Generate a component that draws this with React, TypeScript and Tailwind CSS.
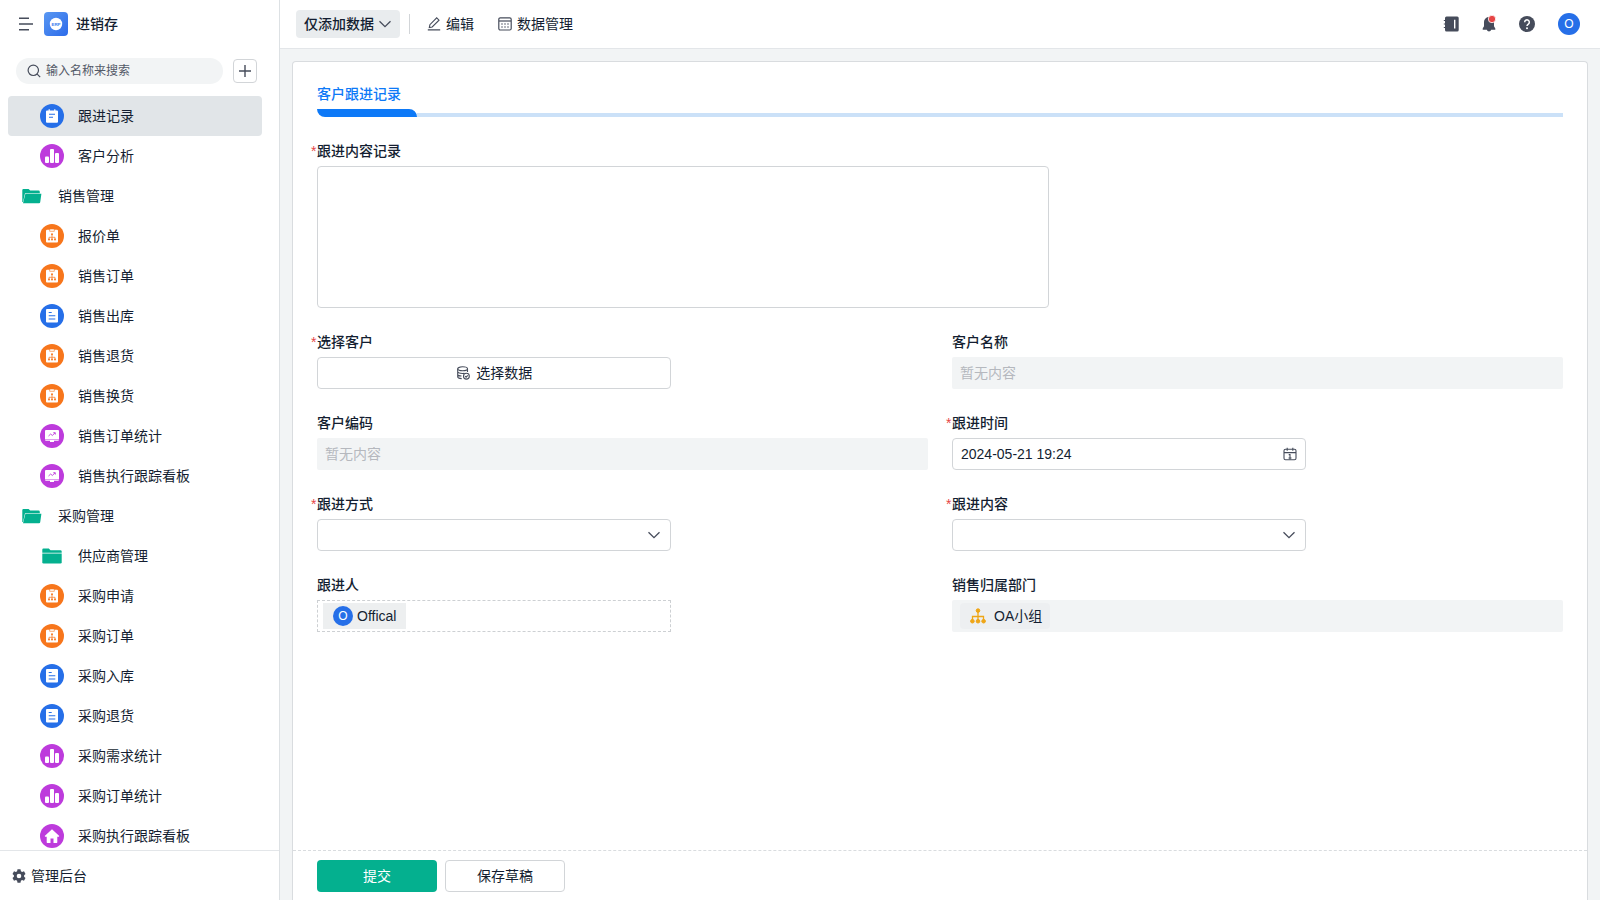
import { ReactNode, useState } from 'react';
import clsx from 'clsx';

type IconKind = 'note' | 'chart' | 'flow' | 'doc' | 'board' | 'home' | 'folder' | 'folderOpen';

interface NavItem {
    label: string;
    icon: IconKind;
    level: 0 | 1;
}

const navItems: NavItem[] = [
    { label: '跟进记录', icon: 'note', level: 1 },
    { label: '客户分析', icon: 'chart', level: 1 },
    { label: '销售管理', icon: 'folderOpen', level: 0 },
    { label: '报价单', icon: 'flow', level: 1 },
    { label: '销售订单', icon: 'flow', level: 1 },
    { label: '销售出库', icon: 'doc', level: 1 },
    { label: '销售退货', icon: 'flow', level: 1 },
    { label: '销售换货', icon: 'flow', level: 1 },
    { label: '销售订单统计', icon: 'board', level: 1 },
    { label: '销售执行跟踪看板', icon: 'board', level: 1 },
    { label: '采购管理', icon: 'folderOpen', level: 0 },
    { label: '供应商管理', icon: 'folder', level: 1 },
    { label: '采购申请', icon: 'flow', level: 1 },
    { label: '采购订单', icon: 'flow', level: 1 },
    { label: '采购入库', icon: 'doc', level: 1 },
    { label: '采购退货', icon: 'doc', level: 1 },
    { label: '采购需求统计', icon: 'chart', level: 1 },
    { label: '采购订单统计', icon: 'chart', level: 1 },
    { label: '采购执行跟踪看板', icon: 'home', level: 1 },
];

const BLUE = '#266FE8';
const PURPLE = '#BD3BDC';
const ORANGE = '#F7761C';
const GREEN = '#04B08F';

function NavIcon({ kind }: { kind: IconKind }) {
    return (
        <svg viewBox="0 0 24 24" className="size-6 shrink-0" fill="none" aria-hidden="true">
            {kind === 'note' && (
                <>
                    <circle cx="12" cy="12" r="12" fill={BLUE} />
                    <path d="M7 6.5h1.6V5.2h1.2v1.3h4.4V5.2h1.2v1.3H17a1 1 0 0 1 1 1v10.3a1 1 0 0 1-1 1H7a1 1 0 0 1-1-1V7.5a1 1 0 0 1 1-1z" fill="#fff" />
                    <path d="M9 10.2h6M9 13.2h4" stroke={BLUE} strokeWidth="1.1" />
                </>
            )}
            {kind === 'chart' && (
                <>
                    <circle cx="12" cy="12" r="12" fill={PURPLE} />
                    <rect x="5" y="12.5" width="4" height="6.5" rx="1" fill="#fff" />
                    <rect x="10" y="5" width="4" height="14" rx="1" fill="#fff" />
                    <rect x="15" y="9" width="4" height="10" rx="1" fill="#fff" />
                </>
            )}
            {kind === 'flow' && (
                <>
                    <circle cx="12" cy="12" r="12" fill={ORANGE} />
                    <path d="M7 5.8h10a1 1 0 0 1 1 1v10.8a1 1 0 0 1-1 1H7a1 1 0 0 1-1-1V6.8a1 1 0 0 1 1-1z" fill="#fff" />
                    <path d="M9.7 5v2.3h4.6V5z" fill="#fff" stroke={ORANGE} strokeWidth=".6" />
                    <path d="M12 10.5V15M9 15v-1.7h6V15" stroke={ORANGE} strokeWidth=".7" />
                    <circle cx="12" cy="10.3" r="1" fill={ORANGE} />
                    <circle cx="9" cy="15.5" r="1" fill={ORANGE} />
                    <circle cx="12" cy="15.5" r="1" fill={ORANGE} />
                    <circle cx="15" cy="15.5" r="1" fill={ORANGE} />
                </>
            )}
            {kind === 'doc' && (
                <>
                    <circle cx="12" cy="12" r="12" fill={BLUE} />
                    <rect x="6" y="5" width="12" height="13.5" rx="1" fill="#fff" />
                    <path d="M8.7 8.5h3M8.7 11.8h6.6M8.7 15h6.6" stroke={BLUE} strokeWidth="1.1" />
                </>
            )}
            {kind === 'board' && (
                <>
                    <circle cx="12" cy="12" r="12" fill={PURPLE} />
                    <path d="M6 6h12a1 1 0 0 1 1 1v7.9H5V7a1 1 0 0 1 1-1z" fill="#fff" />
                    <path d="M5 15.4h14v.4a1 1 0 0 1-1 1h-4V18h-4v-1.2H6a1 1 0 0 1-1-1z" fill="#fff" />
                    <path d="M8.5 12l2.2-2 1.6 1.5L15 8.9M13.3 8.7h2v1.9" stroke={PURPLE} strokeWidth=".9" />
                </>
            )}
            {kind === 'home' && (
                <>
                    <circle cx="12" cy="12" r="12" fill={PURPLE} />
                    <path d="M12 5.2l7.3 6.8-.5.8h-1.5v5.5a.6.6 0 0 1-.6.6h-3.2v-4.4h-3v4.4H7.3a.6.6 0 0 1-.6-.6v-5.5H5.2l-.5-.8z" fill="#fff" />
                </>
            )}
            {kind === 'folder' && (
                <>
                    <path d="M2.3 8.8V5.7a1.1 1.1 0 0 1 1.1-1.1h5.4l1.7 1.6h9.9a1.3 1.3 0 0 1 1.3 1.3v1.3z" fill={GREEN} />
                    <path d="M2.3 9.6h19.4v8.7a1.3 1.3 0 0 1-1.3 1.3H3.6a1.3 1.3 0 0 1-1.3-1.3z" fill={GREEN} />
                </>
            )}
            {kind === 'folderOpen' && (
                <>
                    <path d="M2.3 18V6.2a1.1 1.1 0 0 1 1.1-1.1h5.2l1.6 1.5h8.3a1.3 1.3 0 0 1 1.3 1.3v1.3H5L3 18z" fill={GREEN} />
                    <path d="M5.4 9.8h16l-1.2 8.5a1.2 1.2 0 0 1-1.2 1H3z" fill={GREEN} />
                </>
            )}
        </svg>
    );
}

function Chevron() {
    return (
        <svg viewBox="0 0 14 14" className="size-3.5 shrink-0" fill="none" stroke="#464C5B" strokeWidth="1.3" aria-hidden="true">
            <path d="M1.5 4.2L7 9.7l5.5-5.5" />
        </svg>
    );
}

function Field({ label, id, required, children }: { label: string; id: string; required?: boolean; children: ReactNode }) {
    return (
        <div className="flex min-w-0 flex-col">
            <label htmlFor={id} className="mb-1.5 flex h-[19px] items-center font-medium">
                {required && <span className="-ml-1.5 w-1.5 text-sm font-normal text-[#E64545]">*</span>}
                {label}
            </label>
            {children}
        </div>
    );
}

function EmptySelect({ id }: { id: string }) {
    return (
        <div className="relative w-[58%]">
            <select id={id} className="block h-8 w-full appearance-none rounded border border-[#D2D5D8] bg-white px-2">
                <option value=""></option>
            </select>
            <span className="pointer-events-none absolute inset-y-0 right-2.5 flex items-center">
                <Chevron />
            </span>
        </div>
    );
}

function Sidebar() {
    const [active, setActive] = useState('跟进记录');

    return (
        <aside className="flex w-70 shrink-0 flex-col border-r border-[#DDE1E4] bg-white">
            <div className="flex h-12 shrink-0 items-center pl-[19px]">
                <button type="button" aria-label="收起菜单">
                    <svg viewBox="0 0 14 14" className="size-3.5" stroke="#464C5B" strokeWidth="1.5" aria-hidden="true">
                        <path d="M0 1.3h10M0 7h14M0 12.7h10" />
                    </svg>
                </button>
                <svg viewBox="0 0 24 24" className="ml-[11px] size-6" aria-hidden="true">
                    <defs>
                        <linearGradient id="logo" x1="0" y1="0" x2="1" y2="1">
                            <stop offset="0" stopColor="#5A98F2" />
                            <stop offset="1" stopColor="#2C6BEA" />
                        </linearGradient>
                    </defs>
                    <rect width="24" height="24" rx="4" fill="url(#logo)" />
                    <circle cx="12" cy="12" r="6.2" fill="#fff" />
                    <text x="12" y="13.6" textAnchor="middle" fontSize="4.4" fontWeight="700" fill="#3B7BEE">ERP</text>
                </svg>
                <h1 className="ml-2 font-medium">进销存</h1>
            </div>

            <div className="flex h-12 shrink-0 items-center gap-2.5 pr-[22px] pb-0.5 pl-4">
                <label className="flex h-[26px] min-w-0 flex-1 items-center gap-[5px] rounded-full bg-[#F2F4F5] pl-[11px]">
                    <svg viewBox="0 0 14 14" className="size-3.5 shrink-0" fill="none" stroke="#464C5B" strokeWidth="1.2" aria-hidden="true">
                        <circle cx="6.3" cy="6.3" r="5.2" />
                        <path d="M10.2 10.2l3 3" />
                    </svg>
                    <input
                        type="text"
                        aria-label="搜索"
                        placeholder="输入名称来搜索"
                        className="w-full min-w-0 bg-transparent text-xs outline-none placeholder:text-[#525967]"
                    />
                </label>
                <button type="button" aria-label="新建" className="flex size-6 items-center justify-center rounded border border-[#D2D5D8]">
                    <svg viewBox="0 0 12 12" className="size-3" stroke="#464C5B" strokeWidth="1.4" aria-hidden="true">
                        <path d="M0 6h12M6 0v12" />
                    </svg>
                </button>
            </div>

            <nav className="min-h-0 flex-1 overflow-hidden pr-[17px] pl-2">
                {navItems.map((item) => (
                    <button
                        key={item.label}
                        type="button"
                        onClick={() => setActive(item.label)}
                        className={clsx(
                            'flex h-10 w-full items-center gap-3.5 rounded text-left',
                            item.level === 0 ? 'pl-3' : 'pl-8',
                            active === item.label && 'bg-[#E1E5E8]'
                        )}
                    >
                        <NavIcon kind={item.icon} />
                        {item.label}
                    </button>
                ))}
            </nav>

            <button type="button" className="flex h-[50px] shrink-0 items-center gap-[5px] border-t border-[#E3E6E9] pl-3 text-left">
                <svg viewBox="0 0 14 14" className="size-3.5" fill="#464C5B" aria-hidden="true">
                    <path
                        fillRule="evenodd"
                        d="M5.5.3h3l.4 1.9 1.2.7 1.9-.6 1.5 2.6-1.4 1.3v1.6l1.4 1.3-1.5 2.6-1.9-.6-1.2.7-.4 1.9h-3l-.4-1.9-1.2-.7-1.9.6L.5 9.1l1.4-1.3V6.2L.5 4.9 2 2.3l1.9.6 1.2-.7zM7 4.7a2.3 2.3 0 1 0 0 4.6 2.3 2.3 0 0 0 0-4.6z"
                    />
                </svg>
                管理后台
            </button>
        </aside>
    );
}

function TopBar() {
    return (
        <header className="flex h-[49px] shrink-0 items-center border-b border-[#E3E6E9] bg-white pr-5 pl-4">
            <button type="button" className="flex h-7 items-center gap-1 rounded bg-[#E9ECEE] px-2 font-medium">
                仅添加数据
                <Chevron />
            </button>
            <span className="mx-[9px] h-5 w-px bg-[#D2D5D8]" />
            <button type="button" className="ml-2 flex items-center gap-[5px]">
                <svg viewBox="0 0 14 14" className="size-3.5" fill="none" stroke="#464C5B" strokeWidth="1.1" aria-hidden="true">
                    <path d="M.8 12.9h12.4M2.3 10.6l.6-2.9L9.7.9 12 3.2 5.200 10z" />
                </svg>
                编辑
            </button>
            <button type="button" className="ml-6 flex items-center gap-[5px]">
                <svg viewBox="0 0 14 14" className="size-3.5" fill="none" stroke="#464C5B" strokeWidth="1.2" aria-hidden="true">
                    <rect x=".8" y=".8" width="12.4" height="12.2" rx="1.5" />
                    <path d="M1 4h12" />
                    <path d="M3.2 7h1.6M6.2 7h1.6M9.2 7h1.6M3.2 10h1.6M6.2 10h1.6M9.2 10h1.6" />
                </svg>
                数据管理
            </button>

            <div className="ml-auto flex items-center gap-[22px]">
                <button type="button" aria-label="通讯录">
                    <svg viewBox="0 0 16 16" className="size-4" aria-hidden="true">
                        <path d="M3.5.5h10.700a1.5 1.5 0 0 1 1.500 1.500v12a1.5 1.5 0 0 1-1.500 1.500H3.500A1.500 1.500 0 0 1 2 14V2A1.500 1.500 0 0 1 3.500.5z" fill="#464C5B" />
                        <path d="M.8 4.500h2M.8 8h2M.8 11.500h2" stroke="#464C5B" strokeWidth="1.1" />
                        <path d="M11.700 3.700v8.800" stroke="#fff" strokeWidth="1.4" />
                    </svg>
                </button>
                <button type="button" aria-label="消息">
                    <svg viewBox="0 0 16 18" className="h-[18px] w-4" aria-hidden="true">
                        <path d="M8 2a5 5 0 0 1 5 5v4.2l1.3 2.3v1.3h-4.1a2.3 2.3 0 0 1-4.4 0H1.700v-1.300L3 11.2V7a5 5 0 0 1 5-5z" fill="#464C5B" />
                        <circle cx="11" cy="4" r="3.7" fill="#E64545" stroke="#fff" strokeWidth=".8" />
                    </svg>
                </button>
                <button type="button" aria-label="帮助" className="mr-px">
                    <svg viewBox="0 0 16 16" className="size-4" fill="none" aria-hidden="true">
                        <circle cx="8" cy="8" r="8" fill="#464C5B" />
                        <path d="M5.7 6.2a2.3 2.3 0 1 1 3.6 1.9C8.4 8.7 8 9.1 8 10" stroke="#fff" strokeWidth="1.5" />
                        <circle cx="8" cy="12.2" r="1" fill="#fff" />
                    </svg>
                </button>
                <button type="button" aria-label="账号" className="flex size-[22px] items-center justify-center rounded-full bg-[#266FE8] text-xs text-white">
                    O
                </button>
            </div>
        </header>
    );
}

export default function App() {
    return (
        <div className="flex h-screen bg-[#F2F4F5] font-['Liberation_Sans','Noto_Sans_CJK_SC',sans-serif] text-sm text-[#141E31]">
            <Sidebar />

            <div className="flex min-w-0 flex-1 flex-col">
                <TopBar />

                <main className="flex min-h-0 flex-1 px-3 pt-3">
                    <form className="flex min-w-0 flex-1 flex-col rounded-t border border-b-0 border-[#D9DCDF] bg-white" onSubmit={(e) => e.preventDefault()}>
                        <div className="min-h-0 flex-1 overflow-hidden px-6 pt-5">
                            <h2 className="flex h-6 items-center font-medium text-[#0D79F7]">客户跟进记录</h2>
                            <div className="mt-[3px] flex items-end">
                                <div className="h-2 w-25 rounded-tr-lg rounded-bl-lg bg-[#0D79F7]" />
                                <div className="h-1 flex-1 bg-[#CBE1F8]" />
                            </div>

                            <div className="mt-6 grid grid-cols-2 gap-6">
                                <div className="col-span-2">
                                    <Field label="跟进内容记录" id="content" required>
                                        <textarea id="content" className="block h-[142px] w-[732px] max-w-full resize-none rounded border border-[#D2D5D8] p-2" />
                                    </Field>
                                </div>

                                <Field label="选择客户" id="customer" required>
                                    <button id="customer" type="button" className="flex h-8 w-[58%] items-center justify-center gap-1.5 rounded border border-[#D2D5D8]">
                                        <svg viewBox="0 0 14 14" className="size-3.5" fill="none" stroke="#464C5B" strokeWidth="1.1" aria-hidden="true">
                                            <ellipse cx="6.6" cy="2.8" rx="4.9" ry="2" />
                                            <path d="M1.7 2.8v8c0 .9 1.6 1.7 4 1.8M11.5 2.8v3.3M1.7 5.6c0 1 2 1.9 4.9 1.9.7 0 1.3 0 1.8-.1M1.7 8.2c0 1 1.5 1.7 3.8 1.8" />
                                            <circle cx="10.4" cy="10.2" r="2.9" />
                                            <path d="M9.1 10.2l1 1 1.7-1.8" />
                                        </svg>
                                        选择数据
                                    </button>
                                </Field>

                                <Field label="客户名称" id="name">
                                    <input id="name" readOnly placeholder="暂无内容" className="h-8 w-full rounded-xs bg-[#F2F4F5] px-2 outline-none placeholder:text-[#B5B8BE]" />
                                </Field>

                                <Field label="客户编码" id="code">
                                    <input id="code" readOnly placeholder="暂无内容" className="h-8 w-full rounded-xs bg-[#F2F4F5] px-2 outline-none placeholder:text-[#B5B8BE]" />
                                </Field>

                                <Field label="跟进时间" id="time" required>
                                    <div className="flex h-8 w-[58%] items-center rounded border border-[#D2D5D8] px-2">
                                        <input id="time" type="text" defaultValue="2024-05-21 19:24" className="min-w-0 flex-1 outline-none" />
                                        <svg viewBox="0 0 14 14" className="size-3.5" fill="none" stroke="#464C5B" strokeWidth="1.1" aria-hidden="true">
                                            <rect x="1" y="2.2" width="12" height="10.6" rx="1.5" />
                                            <path d="M1 5.6h12M4.2.8v3M9.8.8v3M5.7 7.6H7v5M5.5 11h3" />
                                        </svg>
                                    </div>
                                </Field>

                                <Field label="跟进方式" id="method" required>
                                    <EmptySelect id="method" />
                                </Field>

                                <Field label="跟进内容" id="topic" required>
                                    <EmptySelect id="topic" />
                                </Field>

                                <Field label="跟进人" id="owner">
                                    <div id="owner" className="flex h-8 w-[58%] items-center border border-dashed border-[#CDD0D3] pl-[5px]">
                                        <span className="flex h-[26px] items-center gap-1 bg-[#EDEFF0] px-2.5">
                                            <span className="flex size-5 items-center justify-center rounded-full bg-[#266FE8] text-xs text-white">O</span>
                                            Offical
                                        </span>
                                    </div>
                                </Field>

                                <Field label="销售归属部门" id="dept">
                                    <div id="dept" className="flex h-8 items-center rounded-xs bg-[#F2F4F5] pl-2">
                                        <span className="flex h-[26px] items-center gap-2 rounded bg-[#EDEFF1] pr-2 pl-2.5">
                                            <svg viewBox="0 0 16 16" className="size-4" fill="#EFA617" stroke="#EFA617" aria-hidden="true">
                                                <path d="M8 3v10M2.5 13V8.5h11V13" fill="none" strokeWidth="1.3" />
                                                <circle cx="8" cy="2.6" r="1.8" />
                                                <circle cx="2.4" cy="13.2" r="1.8" />
                                                <circle cx="8" cy="13.2" r="1.8" />
                                                <circle cx="13.6" cy="13.2" r="1.8" />
                                            </svg>
                                            OA小组
                                        </span>
                                    </div>
                                </Field>
                            </div>
                        </div>

                        <div className="flex h-[50px] shrink-0 items-center gap-2 border-t border-dashed border-[#D9DCDF] px-6">
                            <button type="submit" className="h-8 w-30 rounded bg-[#04B08F] text-white">
                                提交
                            </button>
                            <button type="button" className="h-8 w-30 rounded border border-[#D2D5D8] bg-white">
                                保存草稿
                            </button>
                        </div>
                    </form>
                </main>
            </div>
        </div>
    );
}
